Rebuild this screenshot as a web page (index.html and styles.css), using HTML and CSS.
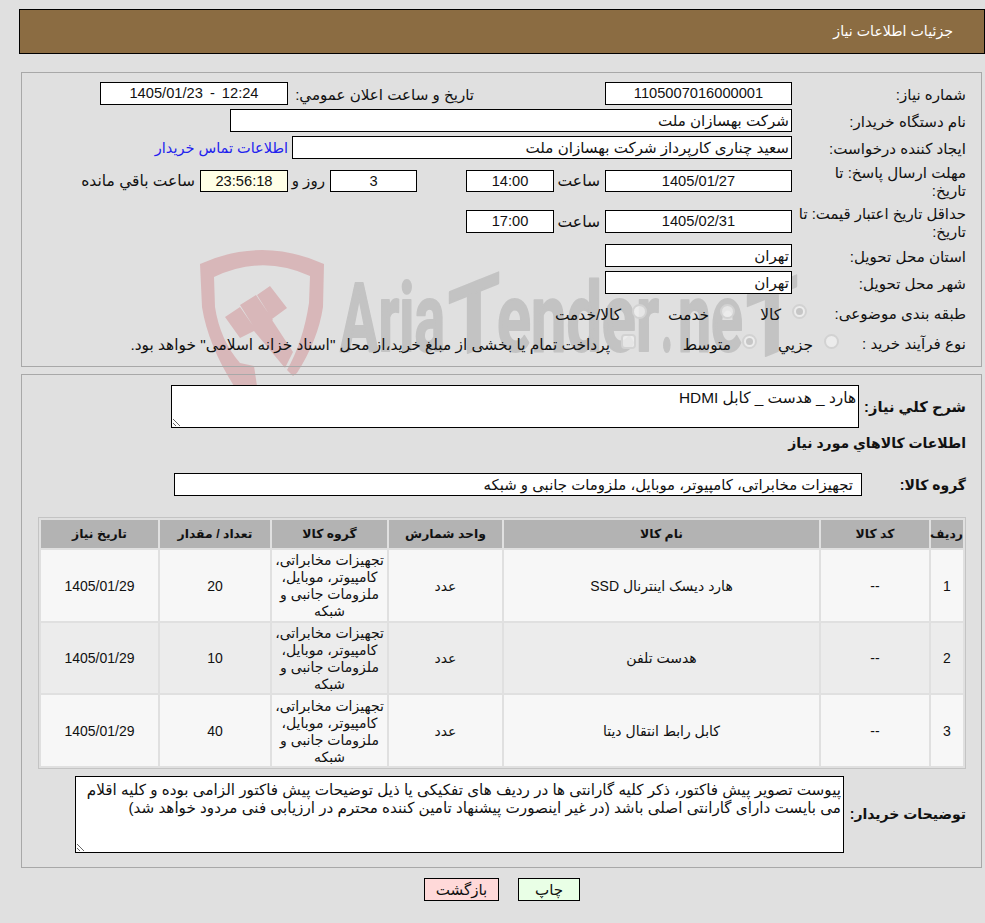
FILE: index.html
```html
<!DOCTYPE html>
<html lang="fa" dir="rtl">
<head>
<meta charset="utf-8">
<title>جزئیات اطلاعات نیاز</title>
<link rel="stylesheet" href="styles.css">
</head>
<body>
<svg class="watermark" viewBox="0 0 985 923" width="985" height="923" aria-hidden="true">
  <path class="wm-red" d="M200 264Q262 236 324 264L323 307Q318 340 297 373L293 376L287 370Q303 342 309 303L310 276Q262 254 214 277L215 307Q220 340 240 363L254 366L257 386L234 386Q208 345 202 307Z"/>
  <path class="wm-red" d="M225 317L240 307L256 330L240 338ZM240 305L256 295L273 320L257 332ZM257 295L270 286L287 308L272 319ZM254 331L272 320L293 352L285 368Z"/>
  <g class="wm-text" direction="ltr">
    <text x="340" y="351" textLength="105" lengthAdjust="spacingAndGlyphs">Aria</text>
    <text transform="translate(448 361) skewY(-22)" textLength="52" lengthAdjust="spacingAndGlyphs">T</text>
    <text x="497" y="351" textLength="162" lengthAdjust="spacingAndGlyphs">ender</text>
    <text x="661" y="351" textLength="12" lengthAdjust="spacingAndGlyphs">.</text>
    <text x="678" y="351" textLength="65" lengthAdjust="spacingAndGlyphs">ne</text>
    <text transform="translate(746 364) skewY(-22)" textLength="52" lengthAdjust="spacingAndGlyphs">T</text>
  </g>
</svg>
<header class="page-title">جزئیات اطلاعات نیاز</header>
<section class="panel panel-info">
  <div class="row">
    <div class="lbl">شماره نیاز:</div>
    <div class="field w187 num">1105007016000001</div>
    <div class="lbl-public">تاریخ و ساعت اعلان عمومي:</div>
    <div class="field w188 num spaced">12:24 - 1405/01/23</div>
  </div>
  <div class="row">
    <div class="lbl">نام دستگاه خریدار:</div>
    <div class="field w562">شرکت بهسازان ملت</div>
  </div>
  <div class="row">
    <div class="lbl">ایجاد کننده درخواست:</div>
    <div class="field w500">سعید چناری کارپرداز شرکت بهسازان ملت</div>
    <a class="contact" href="#">اطلاعات تماس خریدار</a>
  </div>
  <div class="row row-deadline">
    <div class="lbl">مهلت ارسال پاسخ: تا<br>تاریخ:</div>
    <div class="field w187 num">1405/01/27</div>
    <div class="unit">ساعت</div>
    <div class="field w88 num">14:00</div>
    <div class="field w87 num days">3</div>
    <div class="unit-day">روز و</div>
    <div class="field w88 num remain">23:56:18</div>
    <div class="unit-left">ساعت باقي مانده</div>
  </div>
  <div class="row row-validity">
    <div class="lbl lbl-long">حداقل تاریخ اعتبار قیمت: تا<br>تاریخ:</div>
    <div class="field w187 num">1405/02/31</div>
    <div class="unit">ساعت</div>
    <div class="field w88 num">17:00</div>
  </div>
  <div class="row">
    <div class="lbl">استان محل تحویل:</div>
    <div class="field w187">تهران</div>
  </div>
  <div class="row">
    <div class="lbl">شهر محل تحویل:</div>
    <div class="field w187">تهران</div>
  </div>
  <div class="row row-choice">
    <div class="lbl lbl-cat">طبقه بندی موضوعی:</div>
    <div class="opt opt-a"><span class="radio on"></span><span class="opt-text">کالا</span></div>
    <div class="opt opt-b"><span class="radio"></span><span class="opt-text">خدمت</span></div>
    <div class="opt"><span class="radio"></span><span class="opt-text">کالا/خدمت</span></div>
  </div>
  <div class="row row-choice">
    <div class="lbl lbl-proc">نوع فرآیند خرید :</div>
    <div class="opt opt-c"><span class="radio"></span><span class="opt-text">جزیي</span></div>
    <div class="opt opt-d"><span class="radio on"></span><span class="opt-text">متوسط</span></div>
    <div class="opt opt-e"><span class="check"></span><span class="opt-text">پرداخت تمام یا بخشی از مبلغ خرید،از محل "اسناد خزانه اسلامی" خواهد بود.</span></div>
  </div>
</section>
<section class="panel panel-goods">
  <div class="row row-desc">
    <div class="lbl-b lbl-desc">شرح کلي نياز:</div>
    <div class="area w688 desc">هارد _ هدست _ کابل HDMI</div>
  </div>
  <h2 class="goods-title">اطلاعات کالاهاي مورد نياز</h2>
  <div class="row row-group">
    <div class="lbl-b w104">گروه کالا:</div>
    <div class="field w688 group">تجهیزات مخابراتی، کامپیوتر، موبایل، ملزومات جانبی و شبکه</div>
  </div>
  <table class="items">
    <colgroup>
      <col class="c1"><col class="c2"><col class="c3"><col class="c4"><col class="c5"><col class="c6"><col class="c7">
    </colgroup>
    <thead>
      <tr><th>ردیف</th><th>کد کالا</th><th>نام کالا</th><th>واحد شمارش</th><th>گروه کالا</th><th>تعداد / مقدار</th><th>تاریخ نیاز</th></tr>
    </thead>
    <tbody>
      <tr><td>1</td><td>--</td><td>هارد دیسک اینترنال SSD</td><td>عدد</td><td>تجهیزات مخابراتی، کامپیوتر، موبایل، ملزومات جانبی و شبکه</td><td>20</td><td>1405/01/29</td></tr>
      <tr><td>2</td><td>--</td><td>هدست تلفن</td><td>عدد</td><td>تجهیزات مخابراتی، کامپیوتر، موبایل، ملزومات جانبی و شبکه</td><td>10</td><td>1405/01/29</td></tr>
      <tr><td>3</td><td>--</td><td>کابل رابط انتقال دیتا</td><td>عدد</td><td>تجهیزات مخابراتی، کامپیوتر، موبایل، ملزومات جانبی و شبکه</td><td>40</td><td>1405/01/29</td></tr>
    </tbody>
  </table>
  <div class="row row-notes">
    <div class="lbl-b w122">توضیحات خریدار:</div>
    <div class="area w769 notes">پیوست تصویر پیش فاکتور، ذکر کلیه گارانتی ها در ردیف های تفکیکی یا ذیل توضیحات پیش فاکتور الزامی بوده و کلیه اقلام می بایست دارای گارانتی اصلی باشد (در غیر اینصورت پیشنهاد تامین کننده محترم در ارزیابی فنی مردود خواهد شد)</div>
  </div>
</section>
<div class="actions">
  <button class="btn btn-print">چاپ</button>
  <button class="btn btn-back">بازگشت</button>
</div>
</body>
</html>
```
FILE: styles.css
```css
* { box-sizing: border-box; }
html, body { margin: 0; height: 923px; overflow: hidden; }
body {
  position: relative;
  background: #e0e0e0;
  color: #111;
  font: 15.1px/18px "Liberation Sans", "DejaVu Sans", sans-serif;
  direction: rtl;
  padding-top: 9px;
}
.watermark { position: absolute; left: 0; top: 0; pointer-events: none; }
.wm-red { fill: #d8b7b9; }
.wm-text { fill: #c3c3c3; stroke: #c3c3c3; stroke-width: 2px; stroke-linejoin: round; font: 700 96px "Roboto", sans-serif; }
.page-title {
  position: relative;
  margin: 0 0 0 19px;
  height: 45px;
  padding: 0 31px 0 0;
  border: 1px solid #000;
  background: #8b6c42;
  color: #fff;
  font-size: 14.2px;
  line-height: 43px;
}
.panel {
  position: relative;
  margin: 0 3px 0 21px;
  border: 1px solid #a8a8a8;
  padding-right: 15px;
}
.panel-info { margin-top: 18px; height: 295px; padding-top: 9px; }
.panel-goods { margin-top: 7px; height: 494px; padding-top: 10px; }
.row { display: flex; align-items: center; min-height: 23px; margin-bottom: 4px; }
.lbl { width: 174px; padding: 2px 0 0 8px; flex: none; white-space: nowrap; }
.lbl-long { font-size: 14.9px; padding-left: 0; }
.field {
  height: 23px;
  flex: none;
  border: 1px solid #000;
  background: #fff;
  padding: 0 2px;
  line-height: 21px;
  white-space: nowrap;
  overflow: hidden;
}
.num { text-align: center; font-size: 14.67px; }
.spaced { word-spacing: 3px; }
.w187 { width: 187px; }
.w188 { width: 188px; }
.w562 { width: 562px; }
.w500 { width: 500px; }
.w88 { width: 88px; }
.w87 { width: 87px; }
.w688 { width: 688px; }
.w769 { width: 769px; }
.w104 { width: 104px; }
.w122 { width: 122px; }
.lbl-public { margin-right: 131px; padding-top: 2px; width: 186px; flex: none; white-space: nowrap; }
.contact { margin-right: 4px; color: #2222ee; font-size: 14.5px; text-decoration: none; white-space: nowrap; }
.row-deadline { height: 36px; }
.row-deadline .field { height: 22px; line-height: 20px; }
.row-validity { height: 37px; }
.unit { width: 51px; padding-right: 5px; flex: none; font-size: 15.6px; }
.days { margin-right: 49px; }
.unit-day { width: 42px; padding-right: 5px; flex: none; white-space: nowrap; }
.remain { background: #ffffe6; }
.unit-left { padding-right: 5px; font-size: 15.5px; white-space: nowrap; }
.row-choice { height: 29px; margin-bottom: 4px; }
.row-choice + .row-choice { height: 22px; }
.lbl-cat { width: 159px; padding-left: 0; }
.lbl-proc { width: 127px; padding-left: 0; }
.opt { display: flex; align-items: center; gap: 11px; flex: none; white-space: nowrap; font-size: 15.4px; }
.opt-text { margin-top: 5px; }
.opt-a { width: 72px; }
.opt-b { width: 88px; }
.opt-c { width: 82px; }
.opt-d { width: 121px; }
.radio, .check {
  position: relative;
  width: 15px;
  height: 15px;
  flex: none;
  border: 2px solid #d2d2d2;
  border-radius: 50%;
  background: rgba(240, 240, 240, .75);
  margin-top: -2px;
}
.check { border-radius: 4px; }
.radio.on::after {
  content: "";
  position: absolute;
  inset: 2px;
  border-radius: 50%;
  background: #c6c6c6;
}
.lbl-b { font-weight: 700; font-size: 14px; flex: none; }
.lbl-desc { width: 107px; font-size: 14.67px; }
.area {
  flex: none;
  border: 1px solid #000;
  background: #fff;
  overflow: hidden;
  resize: both;
}
.row-desc { margin-bottom: 0; }
.desc { height: 43px; padding: 3px 2px; font-size: 15.4px; }
.goods-title { margin: 7px 0 0; font-size: 14px; line-height: 17px; height: 38px; }
.row-group { margin: 0; }
.group { padding-right: 8px; font-size: 14.95px; }
.items {
  width: 928px;
  margin: 21px 0 7px;
  table-layout: fixed;
  border-collapse: separate;
  border-spacing: 2px;
  border: 1px solid #c4c4c4;
  text-align: center;
}
.c1 { width: 32px; }
.c2 { width: 108px; }
.c3 { width: 315px; }
.c4 { width: 113px; }
.c5 { width: 115px; }
.c6 { width: 110px; }
.c7 { width: 117px; }
.items th { height: 28px; padding: 0; background: #b3b3b3; font-size: 12.4px; white-space: nowrap; }
.items td { height: 70.67px; padding: 2px 0 0; background: #f7f7f7; font-size: 14px; line-height: 17px; }
.items tbody tr:nth-child(even) td { background: #ececec; }
.row-notes { margin: 0; }
.notes { height: 77px; padding: 4px 2px; font-size: 15.2px; }
.actions { position: relative; display: flex; justify-content: center; gap: 19px; margin-top: 10px; padding-left: 19px; }
.btn {
  height: 23px;
  padding: 0;
  border: 1px solid #000;
  font: inherit;
  color: #111;
}
.btn-back { width: 75px; background: #ffd9d9; }
.btn-print { width: 62px; background: #e9ffe6; }
```
